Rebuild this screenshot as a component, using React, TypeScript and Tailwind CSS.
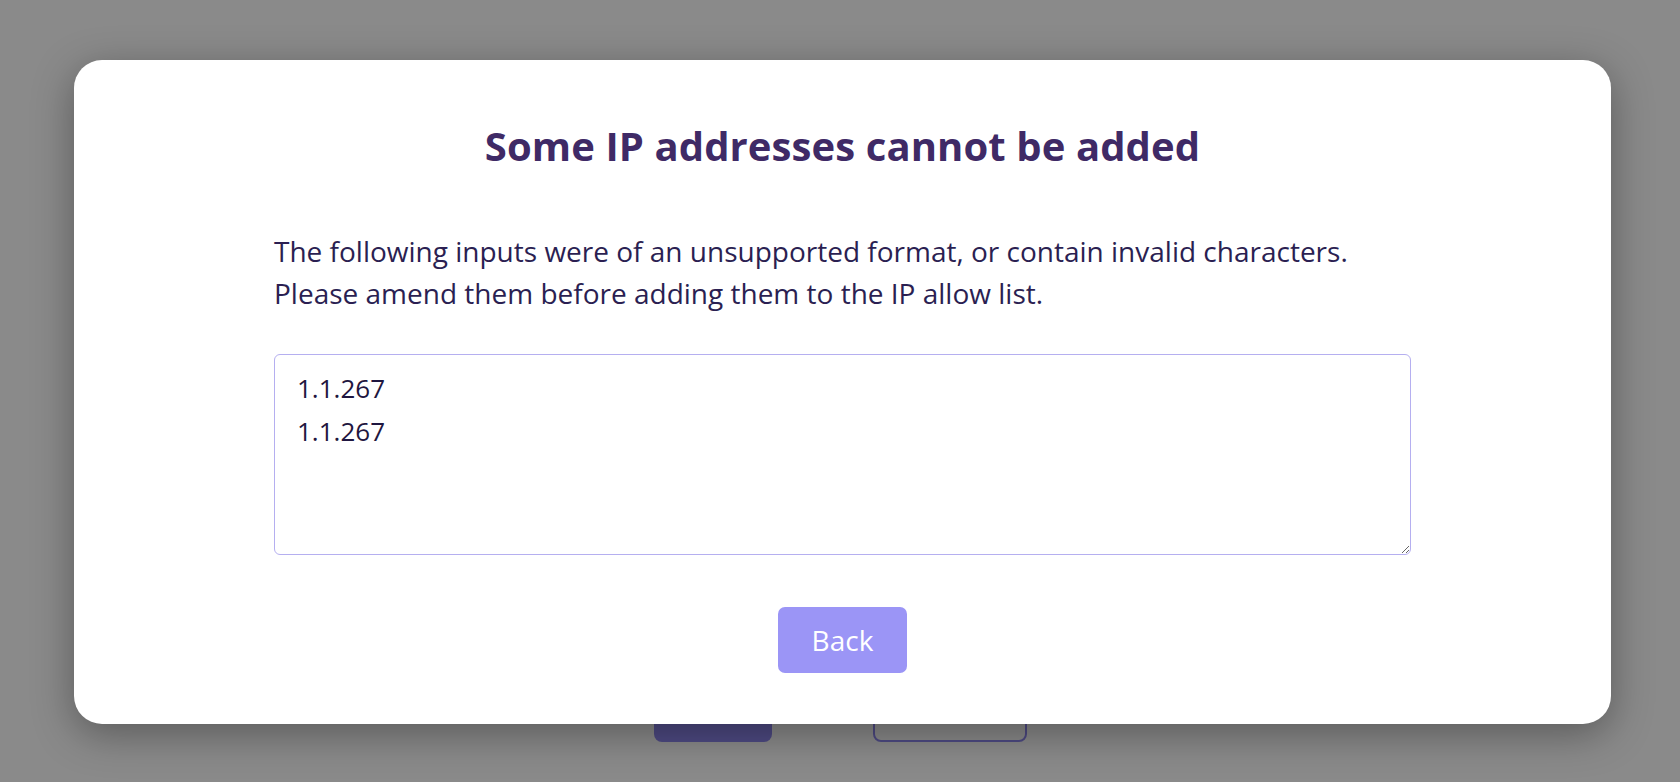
import React from 'react';

const font = { fontFamily: '"Open Sans", "Noto Sans", sans-serif' };

const App: React.FC = () => {
  return (
    <div className="relative h-screen w-full overflow-hidden bg-white" style={font}>
      {/* Page behind the dialog */}
      <div className="flex h-full flex-col items-center justify-end pb-[40px]">
        <div className="flex items-center gap-[101px]">
          <button className="h-[56px] w-[118px] rounded-[8px] bg-[#918af2]" />
          <button className="h-[56px] w-[154px] rounded-[8px] border-2 border-[#918af2] bg-white" />
        </div>
      </div>

      {/* Overlay */}
      <div className="absolute inset-0 bg-black/[0.46] pl-[74px] pt-[60px]">
        <div className="flex w-[1537px] flex-col items-center rounded-[28px] bg-white px-[200px] pb-[51px] pt-[62px] shadow-[0_10px_40px_rgba(0,0,0,0.35)]">
          <h2 className="text-[40px] font-bold leading-[1.2] tracking-[0.1px] text-[#3f2a66]">
            Some IP addresses cannot be added
          </h2>

          <p className="mt-[60px] w-full text-[28px] leading-[42px] text-[#2b1f52]">
            The following inputs were of an unsupported format, or contain invalid characters.
            <br />
            Please amend them before adding them to the IP allow list.
          </p>

          <textarea
            readOnly
            defaultValue={'1.1.267\n1.1.267'}
            className="mt-[40px] h-[201px] w-full rounded-[6px] border border-[#b5aff0] bg-white px-[22px] pt-[12px] text-[26px] leading-[43px] text-[#1f1640] outline-none"
            style={font}
          />

          <button className="mt-[52px] h-[66px] w-[129px] rounded-[7px] bg-[#9b95f6] text-[28px] text-white">
            Back
          </button>
        </div>
      </div>
    </div>
  );
};

export default App;
